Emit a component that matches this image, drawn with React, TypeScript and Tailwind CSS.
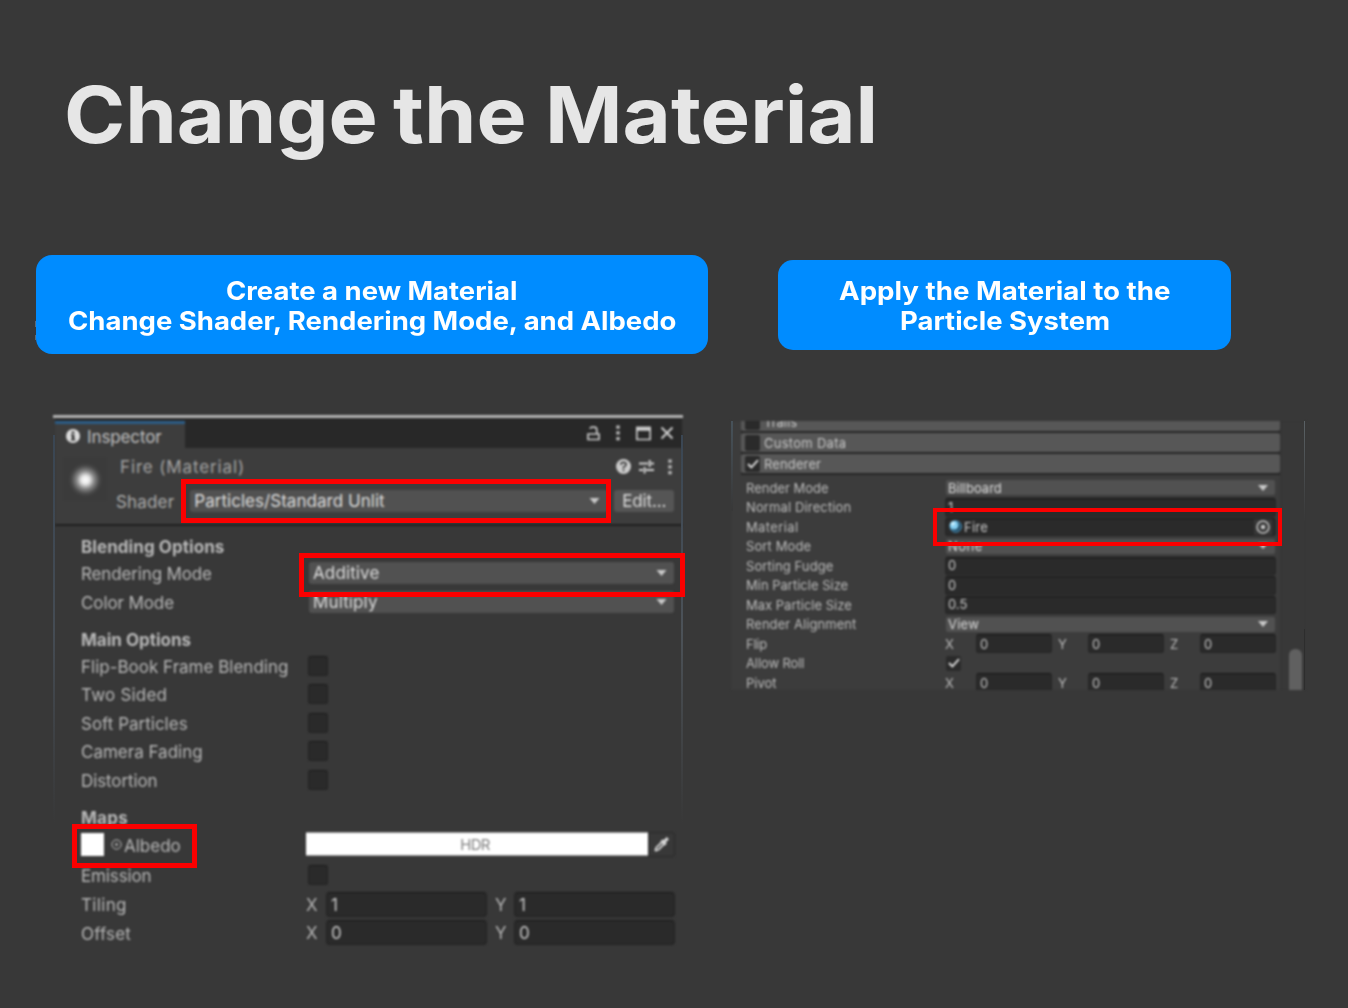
import { useLayoutEffect, useRef } from "react";
import type { ReactNode } from "react";

/* Text tracked so that it spans a given width. */
function Fit({ w, children, className = "" }: { w: number; children: string; className?: string }) {
  const ref = useRef<HTMLSpanElement>(null);
  useLayoutEffect(() => {
    const el = ref.current;
    if (!el) return;
    el.style.letterSpacing = "0px";
    el.style.letterSpacing = `${(w - el.offsetWidth) / children.length}px`;
  }, [w, children]);
  return (
    <span ref={ref} className={`inline-block shrink-0 whitespace-pre ${className}`}>
      {children}
    </span>
  );
}

/* Text with extended letterforms: widened to span a given width. */
function Wide({ w, children, className = "" }: { w: number; children: string; className?: string }) {
  const ref = useRef<HTMLSpanElement>(null);
  useLayoutEffect(() => {
    const el = ref.current;
    if (!el) return;
    el.style.transform = `scaleX(${w / el.offsetWidth})`;
  }, [w, children]);
  return (
    <span className={`block shrink-0 ${className}`} style={{ width: w }}>
      <span ref={ref} className="inline-block origin-left whitespace-pre">{children}</span>
    </span>
  );
}

function Caret({ className = "" }: { className?: string }) {
  return (
    <svg viewBox="0 0 10 6" className={`shrink-0 ${className}`} fill="#c8c8c8">
      <path d="M0 0h10L5 6z" />
    </svg>
  );
}

function Dots() {
  return (
    <svg viewBox="0 0 4 16" className="h-4 w-1" fill="#bcbcbc">
      <rect x="0.3" y="0.5" width="3.4" height="3.2" />
      <rect x="0.3" y="6.3" width="3.4" height="3.2" />
      <rect x="0.3" y="12.1" width="3.4" height="3.2" />
    </svg>
  );
}

function Row({ h, label, w, bold, children }: { h: string; label: string; w: number; bold?: boolean; children?: ReactNode }) {
  return (
    <div className={`flex items-center ${h}`}>
      <div className="w-[225px] shrink-0 pt-[3.5px] leading-none">
        <Fit w={w} className={bold ? "font-bold" : ""}>{label}</Fit>
      </div>
      {children}
    </div>
  );
}

function Check() {
  return <div className="ml-[1.5px] h-5 w-5 rounded-[3px] border border-[#242424] border-t-[#1c1c1c] bg-[#2a2a2a]" />;
}

function Dropdown({ text, w }: { text: string; w: number }) {
  return (
    <div className="ml-[3px] flex h-[22px] w-[365px] items-center justify-between rounded-[3px] bg-[#515151] pr-[7px] pl-1 leading-none text-[#dedede]">
      <Fit w={w} className="pt-px">{text}</Fit>
      <Caret className="h-[6px] w-[11px]" />
    </div>
  );
}

function Vec({ value }: { value: string }) {
  return (
    <div className="flex items-center">
      <span className="w-5 pt-[3px] text-[#b4b4b4]">X</span>
      <div className="flex h-[25px] w-[161px] items-center rounded-[4px] border border-[#232323] border-t-[#1a1a1a] bg-[#2a2a2a] pt-[3px] pl-[4px] text-[#c8c8c8]">{value}</div>
      <span className="ml-2 w-[19px] pt-[3px] text-[#b4b4b4]">Y</span>
      <div className="flex h-[25px] w-[161px] items-center rounded-[4px] border border-[#232323] border-t-[#1a1a1a] bg-[#2a2a2a] pt-[3px] pl-[4px] text-[#c8c8c8]">{value}</div>
    </div>
  );
}

function Inspector() {
  return (
    <section className="relative h-[535px] w-[632px]">
      <div className="h-full w-[630px] text-[17px] text-[#b8b8b8] blur-[0.8px]">
        <div className="h-[3px] bg-[#b4b4b4]" />
        <div className="ml-[2px] flex h-[30px] w-[627px] bg-[#282828]">
          <div className="mt-[3px] flex w-[130px] items-center border-t-[3px] border-[#2c5d87] bg-[#3d3d3d] pl-[11px]">
            <svg viewBox="0 0 14 14" className="h-[14px] w-[14px]">
              <circle cx="7" cy="7" r="7" fill="#dcdcdc" />
              <path d="M5.6 2.4h2.8v2.2H5.6zM5 5.6h3.4v4.6h1v1.4H4.8v-1.4h1V7H5z" fill="#333" />
            </svg>
            <Fit w={75} className="ml-[7px] pt-[2px] leading-none text-[#c0c0c0]">Inspector</Fit>
          </div>
          <div className="ml-auto flex items-center pr-2">
            <svg viewBox="0 0 13 15" className="h-[15px] w-[13px]" fill="none" stroke="#cacaca" strokeWidth="1.7">
              <path d="M1 8h11v5.5H1zM9.8 8V3.8Q9.8 1.2 7 1.2H5.4Q3.4 1.2 3 2.8" />
            </svg>
            <span className="ml-[16px]"><Dots /></span>
            <svg viewBox="0 0 15 15" className="ml-[16px] h-[15px] w-[15px]" fill="none" stroke="#cacaca" strokeWidth="1.7">
              <path d="M.8 1.5h13.4v12H.8z" />
              <path d="M0 2.8h15" strokeWidth="4" />
            </svg>
            <svg viewBox="0 0 14 14" className="ml-[9px] h-[14px] w-[14px]" stroke="#cacaca" strokeWidth="2.1">
              <path d="M1.5 1.5l11 11M12.5 1.5l-11 11" />
            </svg>
          </div>
        </div>
        <div className="ml-[2px] flex h-[76px] w-[627px] bg-[#3d3d3d]">
          <div className="mt-[9px] ml-[8px] h-11 w-11 bg-[radial-gradient(circle_at_51%_52%,#ffffff_0px,#e8e8e8_4px,#858585_9px,#484848_14px,#3b3b3b_17px)]" />
          <div className="flex-1">
            <div className="flex h-[37px] items-center pr-[10px] pl-[13px]">
              <Fit w={125} className="pt-[2px] leading-none text-[#a4a4a4]">Fire (Material)</Fit>
              <svg viewBox="0 0 14 14" className="ml-auto h-[15px] w-[15px]">
                <circle cx="7" cy="7" r="7" fill="#cacaca" />
                <path d="M4.6 5.3Q4.7 3.2 7 3.2t2.4 1.9Q9.4 6.4 7 7.6v1.2M7 9.8v1.6" fill="none" stroke="#3d3d3d" strokeWidth="1.6" />
              </svg>
              <svg viewBox="0 0 15 15" className="ml-2 h-[15px] w-[15px]" stroke="#d0d0d0" strokeWidth="2">
                <path d="M0 4.5h9M12 4.5h3M10.7 1v7M0 11h4M7 11h8M5.6 8v6.5" />
              </svg>
              <span className="ml-[14px]"><Dots /></span>
            </div>
            <div className="flex h-[31px] items-center pl-[9px]">
              <Fit w={58} className="pt-[3px] leading-none text-[#acacac]">Shader</Fit>
              <div className="ml-[16px] flex h-[22px] w-[418px] items-center justify-between rounded-[3px] bg-[#515151] pr-[8px] pl-[4px] leading-none text-[#dedede]">
                <Fit w={190} className="pt-px">Particles/Standard Unlit</Fit>
                <Caret className="h-[6px] w-[11px]" />
              </div>
              <div className="ml-[6px] flex h-[22px] w-[60px] items-center justify-center rounded-[3px] bg-[#555555] leading-none text-[#dedede]">
                <Fit w={44} className="pt-px">Edit...</Fit>
              </div>
            </div>
          </div>
        </div>
        <div className="ml-[2px] h-[2px] w-[627px] bg-[#202020]" />
        <div className="pt-[7px] pl-[28px]">
          <Row h="h-[26px]" label="Blending Options" w={143} bold />
          <Row h="h-[28px]" label="Rendering Mode" w={131}><Dropdown text="Additive" w={66} /></Row>
          <Row h="h-[29px]" label="Color Mode" w={93}><Dropdown text="Multiply" w={65} /></Row>
          <div className="h-[10px]" />
          <Row h="h-[25px]" label="Main Options" w={110} bold />
          <Row h="h-[29px]" label="Flip-Book Frame Blending" w={207}><Check /></Row>
          <Row h="h-[28px]" label="Two Sided" w={86}><Check /></Row>
          <Row h="h-[29px]" label="Soft Particles" w={107}><Check /></Row>
          <Row h="h-[28px]" label="Camera Fading" w={122}><Check /></Row>
          <Row h="h-[29px]" label="Distortion" w={77}><Check /></Row>
          <div className="h-[10px]" />
          <Row h="h-[26px]" label="Maps" w={47} bold />
          <div className="flex h-[28px] items-center">
            <div className="h-[23px] w-[23px] bg-white" />
            <svg viewBox="0 0 11 11" className="ml-[7px] h-[11px] w-[11px]" fill="none" stroke="#c4c4c4">
              <circle cx="5.5" cy="5.5" r="4.6" />
              <circle cx="5.5" cy="5.5" r="0.9" fill="#c4c4c4" />
            </svg>
            <div className="w-[184px] pt-[5px] pl-[2px] leading-none"><Fit w={57}>Albedo</Fit></div>
            <div className="flex h-6 w-[342px] items-center justify-center border-y border-[#999] bg-white pr-1 text-[15px] leading-none text-[#808080]">
              <Fit w={30}>HDR</Fit>
            </div>
            <div className="flex h-[25px] w-[27px] items-center justify-center rounded-r-[3px] border border-[#2a2a2a]">
              <svg viewBox="0 0 16 16" className="h-[17px] w-[17px]" fill="none" stroke="#d8d8d8">
                <path d="M2 14l1-3 6-6M5 13l6-6M2 14l3-1" strokeWidth="1.6" />
                <path d="M8 4.2l4 4M10.2 5.8l3.8-3.8" strokeWidth="3" />
              </svg>
            </div>
          </div>
          <Row h="h-[33px]" label="Emission" w={71}><Check /></Row>
          <Row h="h-[26px]" label="Tiling" w={46}><Vec value="1" /></Row>
          <Row h="h-[31px]" label="Offset" w={50}><Vec value="0" /></Row>
        </div>
      </div>
      <div className="absolute top-[20px] left-0 h-[390px] w-[2px] bg-gradient-to-b from-[#3a4653] via-[#454c54] to-[#383838]" />
      <div className="absolute top-[20px] left-[628px] h-[390px] w-[2px] bg-gradient-to-b from-[#3a4653] via-[#4c5258] to-[#383838]" />
      <div className="absolute top-[64px] left-[128px] h-[44px] w-[430px] border-[5px] border-[#fb0000]" />
      <div className="absolute top-[138px] left-[246px] h-[44px] w-[386px] border-[5px] border-[#fb0000]" />
      <div className="absolute top-[409px] left-[19px] h-[44px] w-[125px] border-[5px] border-[#fb0000]" />
    </section>
  );
}

function Tick() {
  return (
    <svg viewBox="0 0 12 10" className="h-[10px] w-3" fill="none" stroke="#dcdcdc" strokeWidth="1.9">
      <path d="M1 5l3.4 3.4L11 1.2" />
    </svg>
  );
}

function Module({ label, w, on }: { label: string; w: number; on?: boolean }) {
  return (
    <div className="mb-[2px] flex h-[19px] w-[539px] shrink-0 items-center rounded-[2px] bg-[#575757] pl-[4px] text-[#c8c8c8]">
      <div className="mr-[4px] flex h-[16px] w-[15px] items-center justify-center rounded-[2px] bg-[#2a2a2a]">{on && <Tick />}</div>
      <Fit w={w} className="pt-px">{label}</Fit>
    </div>
  );
}

function Prop({ label, w, children }: { label: string; w: number; children: ReactNode }) {
  return (
    <div className="flex h-[19.5px] shrink-0 items-center">
      <div className="w-[199px] shrink-0 pt-px"><Fit w={w}>{label}</Fit></div>
      {children}
    </div>
  );
}

function Select({ text, w }: { text: string; w: number }) {
  return (
    <div className="ml-px flex h-[15px] w-[329px] items-center justify-between rounded-[2px] bg-[#515151] pr-[7px] pl-[2px] text-[#dcdcdc]">
      <Fit w={w} className="pt-px">{text}</Fit>
      <Caret className="h-[6px] w-[10px]" />
    </div>
  );
}

function Field({ children }: { children: ReactNode }) {
  return <div className="flex h-[18.5px] w-[331px] items-center rounded-[3px] border border-[#252525] border-t-[#161616] bg-[#2a2a2a] pl-[2px] text-[#c8c8c8]">{children}</div>;
}

function Triple() {
  return (
    <div className="flex items-center">
      {["X", "Y", "Z"].map((axis, i) => (
        <div key={axis} className="flex items-center">
          <span className={i === 0 ? "w-[31px] pt-px" : "w-[30px] pt-px"}>{axis}</span>
          <div className="mr-[6px] flex h-[19px] w-[76px] items-center rounded-[3px] border border-[#252525] border-t-[#161616] bg-[#2a2a2a] pt-px pl-[3px] text-[#c8c8c8]">0</div>
        </div>
      ))}
    </div>
  );
}

function Renderer() {
  return (
    <section className="relative h-[269px] w-[575px]">
      <div className="flex h-full overflow-hidden text-[13px] leading-none text-[#bcbcbc] blur-[0.8px]">
        <div className="flex h-full w-[549px] flex-col overflow-hidden bg-[#3c3c3c] pl-[10px]">
          <div className="-mt-[9px] shrink-0 bg-[#262626]">
            <Module label="Trails" w={33} />
            <Module label="Custom Data" w={82} />
            <Module label="Renderer" w={57} on />
          </div>
          <div className="mt-[3px] flex flex-col pl-[5px]">
            <Prop label="Render Mode" w={83}><Select text="Billboard" w={54} /></Prop>
            <Prop label="Normal Direction" w={105}><Field>1</Field></Prop>
            <Prop label="Material" w={52}>
              <Field>
                <svg viewBox="0 0 13 13" className="ml-[1px] h-[13px] w-[13px]">
                  <circle cx="6.7" cy="6.5" r="5.7" fill="#24506a" stroke="#4d94bd" />
                  <circle cx="5.1" cy="5.1" r="4.4" fill="#83cdf0" />
                  <circle cx="4" cy="3.8" r="2" fill="#c8edfc" />
                </svg>
                <Fit w={24} className="ml-[2px] pt-px">Fire</Fit>
                <div className="mr-[3px] ml-auto flex h-[16px] w-[18px] items-center justify-center bg-[#373737]">
                  <svg viewBox="0 0 14 14" className="h-[14px] w-[14px]" fill="none" stroke="#c8c8c8" strokeWidth="1.5">
                    <circle cx="7" cy="7" r="5.9" />
                    <circle cx="7" cy="7" r="1.5" fill="#c8c8c8" />
                  </svg>
                </div>
              </Field>
            </Prop>
            <Prop label="Sort Mode" w={65}><Select text="None" w={35} /></Prop>
            <Prop label="Sorting Fudge" w={87}><Field>0</Field></Prop>
            <Prop label="Min Particle Size" w={102}><Field>0</Field></Prop>
            <Prop label="Max Particle Size" w={106}><Field>0.5</Field></Prop>
            <Prop label="Render Alignment" w={110}><Select text="View" w={31} /></Prop>
            <Prop label="Flip" w={21}><Triple /></Prop>
            <Prop label="Allow Roll" w={58}>
              <div className="ml-px flex h-[15px] w-[15px] items-center justify-center rounded-[2px] bg-[#2a2a2a]"><Tick /></div>
            </Prop>
            <Prop label="Pivot" w={31}><Triple /></Prop>
          </div>
        </div>
        <div className="flex w-[26px] items-end border-l-2 border-[#353535] bg-[#383838] pl-[7px]">
          <div className="h-[41px] w-[13px] rounded-t-[6px] bg-[#606060]" />
        </div>
      </div>
      <div className="absolute top-0 left-0 h-[90px] w-[2px] bg-gradient-to-b from-[#47525a] to-[#383838]" />
      <div className="absolute top-0 left-[573px] h-[100px] w-[1px] bg-gradient-to-b from-[#5b6266] to-[#383838]" />
      <div className="absolute top-[208px] left-[573px] h-[61px] w-[1px] bg-[#2d2d2d]" />
      <div className="absolute top-[87px] left-[202px] h-[38px] w-[349px] border-4 border-[#fb0000]" />
    </section>
  );
}

export default function App() {
  return (
    <main className="h-[1008px] w-[1348px] overflow-hidden bg-[#383838] font-['Inter',sans-serif]">
      <h1 className="flex h-[255px] pt-[67px] pl-[64px] text-[78.5px] leading-[95px] font-bold text-[#e6e6e6]">
        <Wide w={314}>Change</Wide>
        <Wide w={134} className="ml-[15px]">the</Wide>
        <Wide w={333} className="ml-[18px]">Material</Wide>
      </h1>
      <div className="flex h-[160px] items-start pl-[36px] text-[25.5px] leading-[30px] font-bold text-white">
        <div className="relative flex h-[99px] w-[672px] flex-col items-center rounded-[16px] bg-[#008cff] pt-[21px]">
          <Wide w={292}>Create a new Material</Wide>
          <Wide w={608}>Change Shader, Rendering Mode, and Albedo</Wide>
          <span className="absolute top-[66px] -left-px h-[6px] w-px bg-[#5c6b7a]" />
          <span className="absolute top-[80px] -left-px h-[5px] w-px bg-[#5c6b7a]" />
        </div>
        <div className="mt-[5px] ml-[70px] flex h-[90px] w-[453px] flex-col items-center rounded-[15px] bg-[#008cff] pt-[16px]">
          <Wide w={332}>Apply the Material to the</Wide>
          <Wide w={210}>Particle System</Wide>
        </div>
      </div>
      <div className="flex items-start pl-[53px]">
        <Inspector />
        <div className="mt-[6px] ml-[46px]"><Renderer /></div>
      </div>
    </main>
  );
}
